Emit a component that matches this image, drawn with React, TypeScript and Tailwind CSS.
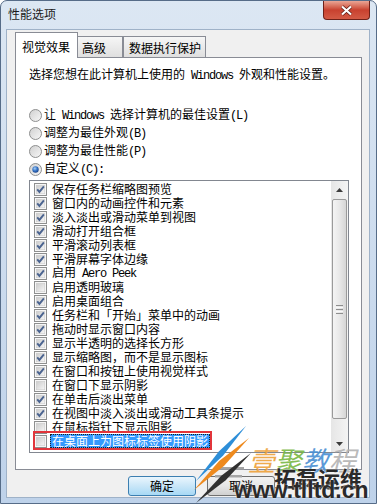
import React from 'react';

const items: [string, boolean][] = [
  ['保存任务栏缩略图预览', true],
  ['窗口内的动画控件和元素', true],
  ['淡入淡出或滑动菜单到视图', true],
  ['滑动打开组合框', true],
  ['平滑滚动列表框', true],
  ['平滑屏幕字体边缘', true],
  ['启用 Aero Peek', true],
  ['启用透明玻璃', false],
  ['启用桌面组合', true],
  ['任务栏和「开始」菜单中的动画', true],
  ['拖动时显示窗口内容', true],
  ['显示半透明的选择长方形', true],
  ['显示缩略图，而不是显示图标', true],
  ['在窗口和按钮上使用视觉样式', true],
  ['在窗口下显示阴影', false],
  ['在单击后淡出菜单', true],
  ['在视图中淡入淡出或滑动工具条提示', true],
  ['在鼠标指针下显示阴影', false],
];

const radios: [string, boolean][] = [
  ['让 Windows 选择计算机的最佳设置(L)', false],
  ['调整为最佳外观(B)', false],
  ['调整为最佳性能(P)', false],
  ['自定义(C):', true],
];

// latin runs are drawn in a mono face, like the half-width glyphs of the dialog font
const Txt = ({ s }: { s: string }) => (
  <>
    {s.split(/([\x00-\x7F]+)/).map((part, i) =>
      /^[\x00-\x7F]+$/.test(part) ? (
        <span key={i} className="font-['Liberation_Mono',monospace] text-[12px] tracking-[-1.2px] whitespace-pre">
          {part}
        </span>
      ) : (
        <span key={i}>{part}</span>
      )
    )}
  </>
);

const Check = ({ on }: { on: boolean }) => (
  <svg width="13" height="13" viewBox="0 0 13 13" className="shrink-0">
    <rect x="0.5" y="0.5" width="12" height="12" fill="#f6f6f6" stroke="#8e8f8f" />
    <rect x="2.25" y="2.25" width="8.5" height="8.5" fill="url(#cbg)" stroke="#c9c9c9" strokeWidth="0.5" />
    {on && <path d="M3.2 6.4 L5.4 8.9 L9.9 3.3" stroke="#4b6490" strokeWidth="1.9" fill="none" />}
  </svg>
);

const Radio = ({ on }: { on: boolean }) => (
  <svg width="13" height="13" viewBox="0 0 13 13" className="shrink-0">
    <circle cx="6.5" cy="6.5" r="6" fill="url(#rbg)" stroke="#8e8f8f" />
    {on && <circle cx="6.5" cy="6.5" r="3.2" fill="url(#rdot)" />}
  </svg>
);

const Arrow = ({ up }: { up: boolean }) => (
  <div className="h-[17px] flex items-center justify-center">
    <svg width="7" height="4" viewBox="0 0 7 4">
      <path d={up ? 'M0 4 L3.5 0 L7 4 Z' : 'M0 0 L3.5 4 L7 0 Z'} fill="#3c3c3c" />
    </svg>
  </div>
);

const btn =
  'h-[20px] w-[68px] rounded-[3px] border flex items-center justify-center text-[12px] leading-none text-black';

export default function App() {
  return (
    <div className="relative w-[377px] h-[504px] overflow-hidden flex flex-col border border-[#566c88] rounded-t-[7px] bg-gradient-to-b from-[#dce7f3] via-[#cddcee] to-[#bed2ea] font-['Noto_Sans_CJK_SC',sans-serif] text-black">
      <svg width="0" height="0" className="block">
        <defs>
          <linearGradient id="cbg" x1="0" y1="0" x2="1" y2="1">
            <stop offset="0" stopColor="#cbcbcb" />
            <stop offset="1" stopColor="#f7f7f7" />
          </linearGradient>
          <linearGradient id="rbg" x1="0" y1="0" x2="1" y2="1">
            <stop offset="0" stopColor="#cfcfcf" />
            <stop offset="1" stopColor="#f8f8f8" />
          </linearGradient>
          <radialGradient id="rdot" cx="0.4" cy="0.35" r="0.7">
            <stop offset="0" stopColor="#a9d0f5" />
            <stop offset="0.5" stopColor="#3a78c9" />
            <stop offset="1" stopColor="#173f86" />
          </radialGradient>
        </defs>
      </svg>

      {/* title bar */}
      <div className="h-[28px] shrink-0 flex items-start">
        <span className="ml-[7px] mt-[5px] text-[12px] leading-[16px] text-[#1b1b1b]">性能选项</span>
        <div className="ml-auto mr-[6px] w-[47px] h-[19px] rounded-b-[4px] border border-t-0 border-[#6e2119] bg-gradient-to-b from-[#e9a595] via-[#c8412f] to-[#d35a45] flex items-center justify-center">
          <svg width="13" height="11" viewBox="0 0 13 11">
            <path d="M2 1.5 L11 9.5 M11 1.5 L2 9.5" stroke="#5b1a12" strokeWidth="3.6" />
            <path d="M2 1.5 L11 9.5 M11 1.5 L2 9.5" stroke="#ffffff" strokeWidth="2.2" />
          </svg>
        </div>
      </div>

      {/* client area */}
      <div className="flex-1 ml-[5px] mr-[6px] mb-[5px] border border-[#9fb2c8] bg-[#f0f0f0] pl-[8px] pr-[7px] pt-[2px] flex flex-col">
        <div className="h-[25px] flex items-end text-[12px]">
          <div className="relative z-10 h-[26px] -mb-px w-[63px] bg-white border border-b-0 border-[#898c95] pl-[6px] pt-[7px] leading-[14px]">
            视觉效果
          </div>
          <div className="h-[21px] w-[46px] -ml-px border border-b-0 border-[#898c95] bg-gradient-to-b from-[#f6f6f6] to-[#dfdfdf] pl-[4px] pt-[4px] leading-[14px]">
            高级
          </div>
          <div className="h-[21px] w-[83px] border border-b-0 border-[#898c95] bg-gradient-to-b from-[#f6f6f6] to-[#dfdfdf] pl-[5px] pt-[4px] leading-[14px]">
            数据执行保护
          </div>
        </div>

        <div className="h-[413px] shrink-0 bg-white border border-[#898c95] text-[12px] flex flex-col">
          <div className="pl-[13px] pt-[8px] leading-[16px]">
            <Txt s="选择您想在此计算机上使用的 Windows 外观和性能设置。" />
          </div>

          <div className="mt-[22px] flex flex-col">
            {radios.map(([label, on]) => (
              <div key={label} className="h-[18px] flex items-center pl-[13px]">
                <Radio on={on} />
                <span className="ml-[2px] leading-[14px]">
                  <Txt s={label} />
                </span>
              </div>
            ))}
          </div>

          <div className="mt-[2px] ml-[13px] w-[320px] h-[273px] border border-[#828790] flex">
            <div className="flex-1 pt-[1px] overflow-hidden flex flex-col">
              {items.map(([label, on]) => (
                <div key={label} className="h-[14px] shrink-0 flex items-center pl-[4px]">
                  <Check on={on} />
                  <span className="ml-[5px] leading-[14px] whitespace-nowrap">
                    <Txt s={label} />
                  </span>
                </div>
              ))}
              <div className="relative h-[14px] shrink-0 flex items-center pl-[4px]">
                <Check on={false} />
                <span className="ml-[3px] px-[1px] leading-[12px] whitespace-nowrap bg-[#3399ff] text-white border border-dotted border-[#202020]">
                  在桌面上为图标标签使用阴影
                </span>
                <div className="absolute left-[3px] top-[-3px] w-[179px] h-[19px] border-2 border-[#e2353b]" />
              </div>
            </div>

            <div className="w-[17px] shrink-0 bg-gradient-to-r from-[#e6e6e6] to-[#f4f4f4] flex flex-col">
              <Arrow up />
              <div className="mt-[1px] h-[220px] mx-[1px] rounded-[2px] border border-[#9a9a9a] bg-gradient-to-r from-[#f4f4f4] via-[#e8e8e8] to-[#d6d6d6] flex flex-col items-center justify-center gap-[1px]">
                <div className="w-[7px] h-px bg-[#8d8d8d]" />
                <div className="w-[7px] h-px bg-[#f8f8f8]" />
                <div className="w-[7px] h-px bg-[#8d8d8d]" />
                <div className="w-[7px] h-px bg-[#f8f8f8]" />
                <div className="w-[7px] h-px bg-[#8d8d8d]" />
              </div>
              <div className="flex-1" />
              <Arrow up={false} />
            </div>
          </div>
        </div>

        <div className="mt-[6px] flex">
          <div className={`${btn} ml-[113px] border-[#3c7fb1] bg-gradient-to-b from-[#eaf6fd] via-[#c9e6f8] to-[#a7d9f5]`}>确定</div>
          <div className={`${btn} ml-[11px] border-[#707070] bg-gradient-to-b from-[#f2f2f2] via-[#e6e6e6] to-[#d0d0d0]`}>取消</div>
        </div>
      </div>

      {/* watermark */}
      <div className="absolute inset-0 pointer-events-none">
        <svg width="377" height="504" className="absolute left-0 top-0">
          <rect x="216" y="466" width="27" height="2.5" fill="#a5a5a5" />
          <rect x="214" y="474" width="27" height="2.5" fill="#a5a5a5" />
          <polygon points="245,425 222.2,454.5 195,480 217.8,450.5" fill="#2d8ed8" />
          <polygon points="248,437 222.9,465 193,489 218.1,460" fill="#ee8a1e" />
          <polygon points="250,452 224.7,479.2 195,502 220.3,474.8" fill="#303030" />
        </svg>
        <span className="absolute left-[247px] top-[445px] text-[27px] leading-none italic whitespace-nowrap opacity-90">
          <span className="text-[#eea23a]">壹</span>
          <span className="text-[#78b743]">聚</span>
          <span className="text-[#4a8fd3]">教</span>
          <span className="text-[#b3b3b3]">程</span>
        </span>
        <span className="absolute left-[273px] top-[465px] text-[22px] leading-none font-bold text-[#2a2a2a] whitespace-nowrap [text-shadow:0_0_2px_#ffffff]">
          拓磊运维
        </span>
        <span className="absolute left-[233px] top-[478px] font-['Liberation_Sans',Arial,sans-serif] font-bold text-[23px] leading-none text-[#2a2a2a] whitespace-nowrap [text-shadow:0_0_2px_#ffffff]">
          www.tlltd.cn
        </span>
      </div>
    </div>
  );
}
